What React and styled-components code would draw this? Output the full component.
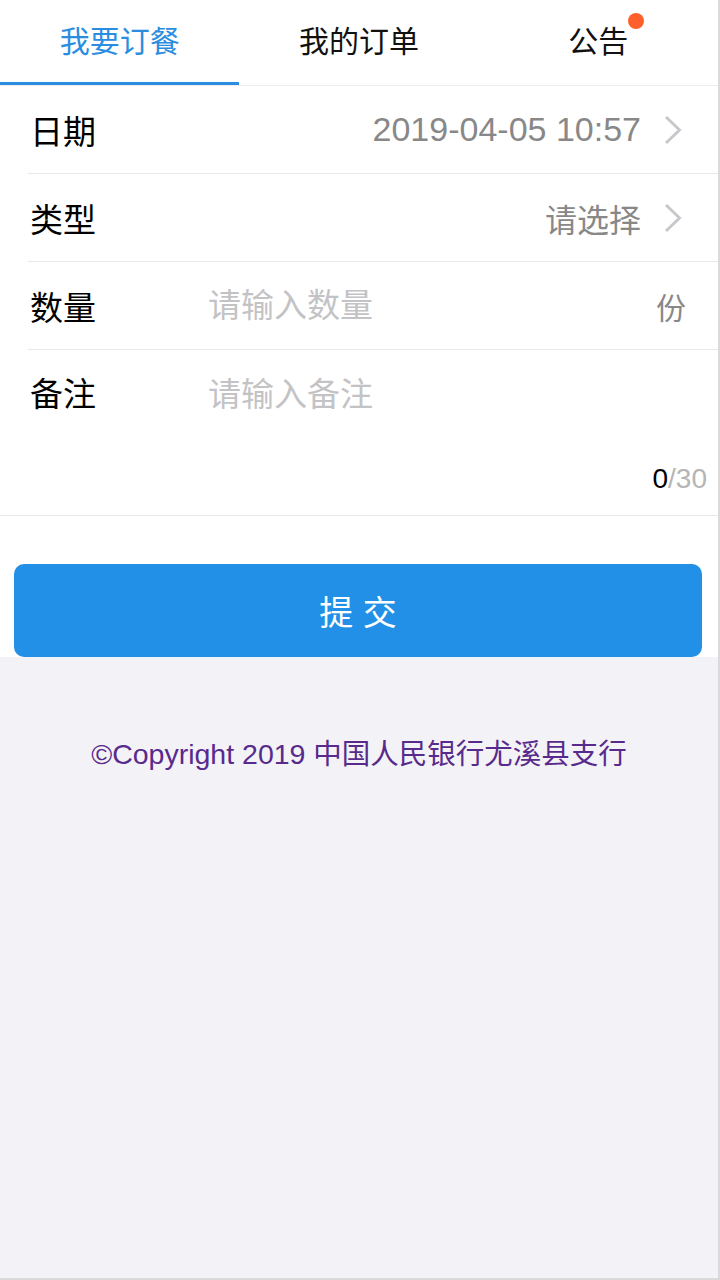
import React from 'react';
import styled, { createGlobalStyle } from 'styled-components';

const Global = createGlobalStyle`
  html, body { margin: 0; padding: 0; background: #fff; }
  body { font-family: "Liberation Sans", "Noto Sans CJK SC", sans-serif; }
  * { box-sizing: border-box; }
`;

const Frame = styled.div`
  width: 720px;
  height: 1280px;
  border-right: 2px solid #dadada;
  border-bottom: 2px solid #dadada;
  background: #f3f3f7;
  display: flex;
  flex-direction: column;
  overflow: hidden;
`;

const TabBar = styled.nav`
  display: grid;
  grid-template-columns: repeat(3, 1fr);
  background: #fff;
  border-bottom: 1px solid #ececec;
`;

const Tab = styled.div`
  height: 85px;
  padding-top: 2px;
  display: flex;
  align-items: center;
  justify-content: center;
  font-size: 30px;
  line-height: 30px;
  color: ${p => (p.$active ? '#2a8de0' : '#111')};
  border-bottom: 3px solid ${p => (p.$active ? '#2a8de0' : 'transparent')};
`;

const TabLabel = styled.span`
  position: relative;
  display: inline-block;
`;

const Badge = styled.span`
  position: absolute;
  top: -14px;
  right: -16px;
  width: 16px;
  height: 16px;
  border-radius: 50%;
  background: #ff5f2b;
`;

const Form = styled.section`
  background: #fff;
`;

const List = styled.div`
  padding-left: 28px;
`;

const Row = styled.div`
  height: 88px;
  display: flex;
  align-items: center;
  padding-right: ${p => p.$pr || 36}px;
  border-bottom: 1px solid #e8e8e8;
`;

const Label = styled.span`
  width: 182px;
  flex: none;
  padding-left: 2px;
  font-size: 33px;
  color: #000;
`;

const Value = styled.span`
  flex: 1;
  text-align: right;
  font-size: ${p => p.$size || 34}px;
  color: #888;
`;

const Chevron = styled.svg`
  flex: none;
  width: 18px;
  height: 30px;
  margin-left: 23px;
`;

const Field = styled.input`
  flex: 1;
  min-width: 0;
  border: none;
  outline: none;
  padding: 0;
  margin-left: -2px;
  background: transparent;
  font-family: inherit;
  font-size: 33px;
  color: #000;
  &::placeholder { color: #c3c3c5; }
`;

const Unit = styled.span`
  font-size: 30px;
  color: #888;
`;

const NoteBlock = styled.div`
  padding: 23px 11px 20px 28px;
  border-bottom: 1px solid #e8e8e8;
`;

const NoteTop = styled.div`
  display: flex;
  align-items: flex-start;
  height: 90px;
  line-height: 44px;
`;

const NoteArea = styled.textarea`
  flex: 1;
  height: 90px;
  border: none;
  outline: none;
  resize: none;
  padding: 0;
  margin-left: -2px;
  background: transparent;
  font-family: inherit;
  font-size: 33px;
  line-height: 44px;
  color: #000;
  &::placeholder { color: #c3c3c5; }
`;

const Counter = styled.div`
  text-align: right;
  font-size: 28px;
  line-height: 32px;
  color: #b5b5b5;
`;

const Current = styled.span`
  color: #000;
`;

const ButtonArea = styled.div`
  padding: 48px 16px 0 14px;
`;

const SubmitButton = styled.button`
  width: 100%;
  height: 93px;
  border: none;
  border-radius: 10px;
  background: #2290e6;
  color: #fff;
  font-family: inherit;
  font-size: 34px;
  display: block;
`;

const Footer = styled.footer`
  padding-top: 77px;
  text-align: center;
  font-size: 28.5px;
  line-height: 40px;
  color: #582a8c;
`;

const ChevronIcon = () => (
  <Chevron viewBox="0 0 18 30">
    <path d="M2 2 L15.5 15 L2 28" fill="none" stroke="#c8c8cc" strokeWidth="3" />
  </Chevron>
);

export default function App() {
  return (
    <>
      <Global />
      <Frame>
        <TabBar>
          <Tab $active><TabLabel>我要订餐</TabLabel></Tab>
          <Tab><TabLabel>我的订单</TabLabel></Tab>
          <Tab><TabLabel>公告<Badge /></TabLabel></Tab>
        </TabBar>
        <Form>
          <List>
            <Row>
              <Label>日期</Label>
              <Value>2019-04-05 10:57</Value>
              <ChevronIcon />
            </Row>
            <Row>
              <Label>类型</Label>
              <Value $size={32}>请选择</Value>
              <ChevronIcon />
            </Row>
            <Row $pr={32}>
              <Label>数量</Label>
              <Field placeholder="请输入数量" />
              <Unit>份</Unit>
            </Row>
          </List>
          <NoteBlock>
            <NoteTop>
              <Label>备注</Label>
              <NoteArea placeholder="请输入备注" />
            </NoteTop>
            <Counter><Current>0</Current>/30</Counter>
          </NoteBlock>
          <ButtonArea>
            <SubmitButton>提 交</SubmitButton>
          </ButtonArea>
        </Form>
        <Footer>©Copyright 2019 中国人民银行尤溪县支行</Footer>
      </Frame>
    </>
  );
}
